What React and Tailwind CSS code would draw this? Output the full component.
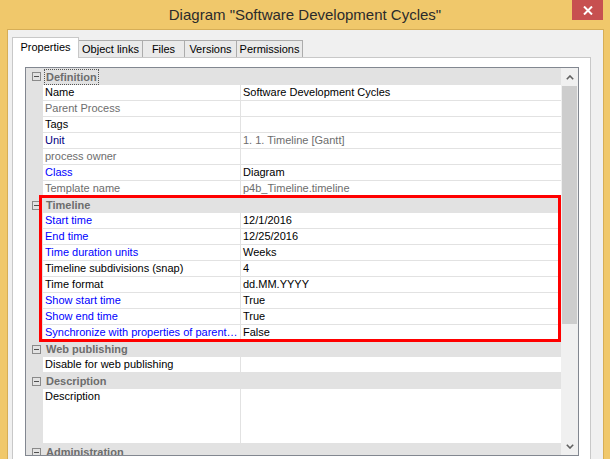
import React from "react";

const tone = {
  black: "text-black",
  gray: "text-[#6d6d6d]",
  navy: "text-[#000080]",
  blue: "text-[#0000ff]",
};

const definition = [
  { name: "Name", value: "Software Development Cycles" },
  { name: "Parent Process", nc: "gray" },
  { name: "Tags" },
  { name: "Unit", nc: "navy", value: "1. 1. Timeline [Gantt]", vc: "gray" },
  { name: "process owner", nc: "gray" },
  { name: "Class", nc: "blue", value: "Diagram" },
  { name: "Template name", nc: "gray", value: "p4b_Timeline.timeline", vc: "gray" },
];

const timeline = [
  { name: "Start time", nc: "blue", value: "12/1/2016" },
  { name: "End time", nc: "blue", value: "12/25/2016" },
  { name: "Time duration units", nc: "blue", value: "Weeks" },
  { name: "Timeline subdivisions (snap)", value: "4" },
  { name: "Time format", value: "dd.MM.YYYY" },
  { name: "Show start time", nc: "blue", value: "True" },
  { name: "Show end time", nc: "blue", value: "True" },
  { name: "Synchronize with properties of parent…", nc: "blue", value: "False" },
];

const tabs = [
  { label: "Object links", w: "w-[64px]" },
  { label: "Files", w: "w-[42px]" },
  { label: "Versions", w: "w-[52px]" },
  { label: "Permissions", w: "w-[66px]" },
];

function Header({ title, focused, first }) {
  return (
    <div
      className={
        "flex shrink-0 items-center bg-[#e2e2e2] " + (first ? "h-[17px]" : "h-[16px]")
      }
    >
      <div className="flex w-[17px] shrink-0 items-center pl-[6px]">
        {/* collapse box */}
        <div className="flex h-[9px] w-[9px] items-center justify-center border border-[#8a8a8a]">
          <div className="h-px w-[5px] bg-[#505050]" />
        </div>
      </div>
      <div
        className={
          "ml-px px-px text-[11px] font-bold leading-[14px] text-[#6d6d6d] " +
          (focused ? "border border-dotted border-[#555]" : "border border-transparent")
        }
      >
        {title}
      </div>
    </div>
  );
}

function Row({ name, value, nc = "black", vc = "black", tall }) {
  return (
    <div className={"flex shrink-0 " + (tall ? "h-[55px]" : "h-[16px]")}>
      <div className="w-[17px] shrink-0 bg-[#e2e2e2]" />
      <div className="flex flex-1 border-b border-[#e2e2e2] bg-white">
        <div
          className={
            "w-[198px] shrink-0 truncate border-r border-[#e2e2e2] pl-[2px] text-[11px] leading-[15px] " +
            tone[nc]
          }
        >
          {name}
        </div>
        <div className={"flex-1 truncate pl-[2px] text-[11px] leading-[15px] " + tone[vc]}>
          {value}
        </div>
      </div>
    </div>
  );
}

function Chevron({ down }) {
  return (
    <svg width="8" height="5" viewBox="0 0 8 5">
      <path
        d={down ? "M0.8 0.8 L4 4 L7.2 0.8" : "M0.8 4.2 L4 1 L7.2 4.2"}
        fill="none"
        stroke="#606060"
        strokeWidth="1.6"
      />
    </svg>
  );
}

export default function App() {
  return (
    <div
      className="flex h-[459px] w-[610px] flex-col overflow-hidden bg-[#f0c86b]"
      style={{ fontFamily: '"Liberation Sans", Arial, sans-serif' }}
    >
      {/* title bar */}
      <div className="grid h-[29px] shrink-0 grid-cols-[1fr_auto_1fr]">
        <div />
        <div className="text-[15px] leading-[29px] text-[#2b2b2b]">
          Diagram "Software Development Cycles"
        </div>
        <div className="flex justify-end pr-[7px]">
          <div className="flex h-[20px] w-[31px] items-center justify-center bg-[#c75050]">
            <svg width="10" height="9" viewBox="0 0 10 9">
              <path d="M1 0.5 L9 8.5 M9 0.5 L1 8.5" stroke="#fff" strokeWidth="2" />
            </svg>
          </div>
        </div>
      </div>

      {/* client area */}
      <div className="ml-[7px] mr-[6px] flex flex-1 flex-col border border-b-0 border-[#d6ae57] bg-[#f0f0f0] pl-[4px] pr-[12px] pt-[7px]">
        {/* tabs */}
        <div className="flex h-[20px] shrink-0 items-end">
          <div className="relative z-10 -mb-px flex h-[21px] w-[67px] items-center justify-center border border-b-0 border-[#c8c8c8] bg-white pb-px text-[11px] text-black">
            Properties
          </div>
          {tabs.map((t) => (
            <div
              key={t.label}
              className={
                "flex h-[17px] items-center justify-center border-r border-t border-[#acacac] bg-[#eaeaea] text-[11px] text-black " +
                t.w
              }
            >
              {t.label}
            </div>
          ))}
        </div>

        {/* tab page */}
        <div className="flex-1 border border-b-0 border-[#c8c8c8] bg-white pl-[12px] pt-[9px]">
          <div className="flex h-[389px] w-[554px] overflow-hidden border border-[#828790]">
            <div className="flex min-w-0 flex-1 flex-col">
              <Header title="Definition" focused first />
              {definition.map((r) => (
                <Row key={r.name} {...r} />
              ))}

              <div className="relative flex shrink-0 flex-col">
                <Header title="Timeline" />
                {timeline.map((r) => (
                  <Row key={r.name} {...r} />
                ))}
                {/* highlight */}
                <div className="absolute -top-[2px] -bottom-px left-[13px] right-0 z-10 border-[3px] border-[#ff0000]" />
              </div>

              <Header title="Web publishing" />
              <Row name="Disable for web publishing" />
              <Header title="Description" />
              <Row name="Description" tall />
              <Header title="Administration" />
            </div>

            {/* scrollbar */}
            <div className="flex w-[17px] shrink-0 flex-col bg-[#f0f0f0]">
              <div className="flex h-[18px] shrink-0 items-center justify-center">
                <Chevron />
              </div>
              <div className="mx-px h-[238px] shrink-0 bg-[#cdcdcd]" />
              <div className="flex-1" />
              <div className="flex h-[17px] shrink-0 items-center justify-center">
                <Chevron down />
              </div>
            </div>
          </div>
        </div>
      </div>
    </div>
  );
}
